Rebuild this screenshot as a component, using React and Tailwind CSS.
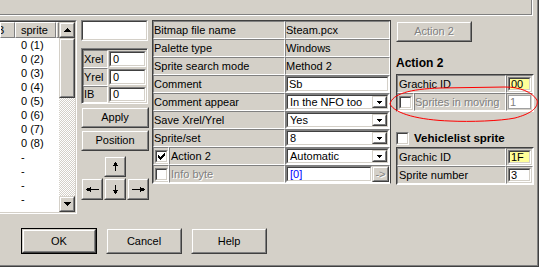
import React from "react";

const RA = "border border-t-[#d4d0c8] border-l-[#d4d0c8] border-r-[#404040] border-b-[#404040]";
const RB = "border border-t-white border-l-white border-r-[#808080] border-b-[#808080]";
const SA = "border border-t-[#808080] border-l-[#808080] border-r-white border-b-white";
const SB = "border border-t-[#404040] border-l-[#404040] border-r-[#d4d0c8] border-b-[#d4d0c8]";
const CELL = "border border-t-[#808080] border-l-[#808080] border-r-white border-b-white";
const DIS = "text-[#808080] [text-shadow:1px_1px_0_#ffffff]";

function Btn({ className = "", children, def = false }) {
  const inner = (
    <div className={`h-full w-full ${RA}`}>
      <div className={`h-full w-full ${RB} flex items-center justify-center leading-none`}>{children}</div>
    </div>
  );
  if (def) return <div className={`border border-black ${className}`}>{inner}</div>;
  return <div className={className}>{inner}</div>;
}

function Field({ className = "", innerClass = "bg-white", children }) {
  return (
    <div className={`${SA} ${className}`}>
      <div className={`h-full w-full ${SB} ${innerClass} flex items-center leading-none overflow-hidden`}>{children}</div>
    </div>
  );
}

function Check({ checked }) {
  return (
    <div className={`w-[13px] h-[13px] ${SA}`}>
      <div className={`w-full h-full bg-white ${SB} flex items-center justify-center`}>
        {checked && (
          <svg width="7" height="7" viewBox="0 0 7 7" shapeRendering="crispEdges">
            <rect x="6" y="0" width="1" height="3" fill="#000" />
            <rect x="5" y="1" width="1" height="3" fill="#000" />
            <rect x="4" y="2" width="1" height="3" fill="#000" />
            <rect x="3" y="3" width="1" height="3" fill="#000" />
            <rect x="2" y="4" width="1" height="3" fill="#000" />
            <rect x="1" y="3" width="1" height="3" fill="#000" />
            <rect x="0" y="2" width="1" height="3" fill="#000" />
          </svg>
        )}
      </div>
    </div>
  );
}

const TriUp = () => (
  <svg width="7" height="4" viewBox="0 0 7 4" shapeRendering="crispEdges">
    <rect x="3" y="0" width="1" height="1" fill="#000" />
    <rect x="2" y="1" width="3" height="1" fill="#000" />
    <rect x="1" y="2" width="5" height="1" fill="#000" />
    <rect x="0" y="3" width="7" height="1" fill="#000" />
  </svg>
);
const TriDown = () => (
  <svg width="7" height="4" viewBox="0 0 7 4" shapeRendering="crispEdges">
    <rect x="0" y="0" width="7" height="1" fill="#000" />
    <rect x="1" y="1" width="5" height="1" fill="#000" />
    <rect x="2" y="2" width="3" height="1" fill="#000" />
    <rect x="3" y="3" width="1" height="1" fill="#000" />
  </svg>
);
const SmallDown = () => (
  <svg width="5" height="3" viewBox="0 0 5 3" shapeRendering="crispEdges">
    <rect x="0" y="0" width="5" height="1" fill="#000" />
    <rect x="1" y="1" width="3" height="1" fill="#000" />
    <rect x="2" y="2" width="1" height="1" fill="#000" />
  </svg>
);
const ArrUp = () => (
  <svg width="5" height="9" viewBox="0 0 5 9" shapeRendering="crispEdges">
    <rect x="2" y="0" width="1" height="9" fill="#000" />
    <rect x="1" y="1" width="3" height="2" fill="#000" />
    <rect x="0" y="3" width="5" height="1" fill="#000" />
  </svg>
);
const ArrDown = () => (
  <svg width="5" height="9" viewBox="0 0 5 9" shapeRendering="crispEdges">
    <rect x="2" y="0" width="1" height="9" fill="#000" />
    <rect x="1" y="6" width="3" height="2" fill="#000" />
    <rect x="0" y="5" width="5" height="1" fill="#000" />
  </svg>
);
const ArrLeft = () => (
  <svg width="13" height="5" viewBox="0 0 13 5" shapeRendering="crispEdges">
    <rect x="0" y="2" width="13" height="1" fill="#000" />
    <rect x="1" y="1" width="3" height="3" fill="#000" />
    <rect x="4" y="0" width="1" height="5" fill="#000" />
  </svg>
);
const ArrRight = () => (
  <svg width="13" height="5" viewBox="0 0 13 5" shapeRendering="crispEdges">
    <rect x="0" y="2" width="13" height="1" fill="#000" />
    <rect x="9" y="1" width="3" height="3" fill="#000" />
    <rect x="8" y="0" width="1" height="5" fill="#000" />
  </svg>
);

function Combo({ text }) {
  return (
    <Field className="h-full w-full">
      <span className="flex-1 pl-[2px] whitespace-nowrap">{text}</span>
      <Btn className="w-[15px] h-full">
        <SmallDown />
      </Btn>
    </Field>
  );
}

function ListView() {
  const items = ["0 (1)", "0 (2)", "0 (3)", "0 (4)", "0 (5)", "0 (6)", "0 (7)", "0 (8)", "-", "-", "-", "-"];
  return (
    <div className="w-[77px] h-[194px] shrink-0 border-t border-r border-b border-t-[#808080] border-r-white border-b-white">
      <div className="h-full flex border-t border-r border-b border-t-[#404040] border-r-[#d4d0c8] border-b-[#d4d0c8]">
        <div className="w-[59px] h-full bg-white overflow-hidden flex flex-col">
          <div className="flex h-[16px] shrink-0 bg-[#d4d0c8]">
            <div className="w-[15px] h-full border border-t-white border-l-white border-r-[#808080] border-b-[#808080] flex items-center overflow-hidden leading-none">
              <span className="ml-[-4px]">B</span>
            </div>
            <div className="w-[41px] h-full border border-t-white border-l-white border-r-[#808080] border-b-[#808080] flex items-center pl-[5px] leading-none">
              sprite
            </div>
            <div className="flex-1 h-full border border-t-white border-l-white border-r-[#808080] border-b-[#808080]" />
          </div>
          <div className="flex flex-col">
            {items.map((t, i) => (
              <div key={i} className="h-[14px] leading-[14px] pl-[21px] whitespace-nowrap">
                {t}
              </div>
            ))}
          </div>
        </div>
        <div className="w-[16px] h-full flex flex-col">
          <Btn className="w-[16px] h-[16px] shrink-0">
            <TriUp />
          </Btn>
          <Btn className="w-[16px] h-[60px] shrink-0" />
          <div className="flex-1 bg-[repeating-conic-gradient(#ffffff_0%_25%,#d4d0c8_0%_50%)] bg-[length:2px_2px]" />
          <Btn className="w-[16px] h-[16px] shrink-0">
            <TriDown />
          </Btn>
        </div>
      </div>
    </div>
  );
}

function SmallGridRow({ label, value, h = "h-[18px]" }) {
  return (
    <div className={`flex ${h}`}>
      <div className={`w-[25px] ${CELL} flex items-center leading-none`}>{label}</div>
      <div className="flex-1 p-[1px]">
        <Field className="h-full w-full">
          <span className="pl-[2px]">{value}</span>
        </Field>
      </div>
    </div>
  );
}

function MiddleColumn() {
  return (
    <div className="ml-[4px] w-[68px] flex flex-col shrink-0">
      <Field className="w-[67px] h-[21px]" />
      <div className={`mt-[7px] w-[67px] h-[56px] ${SA}`}>
        <div className="h-full w-full border-t border-l border-t-[#404040] border-l-[#404040] flex flex-col">
          <SmallGridRow label="Xrel" value="0" />
          <SmallGridRow label="Yrel" value="0" />
          <SmallGridRow label="IB" value="0" h="h-[17px]" />
        </div>
      </div>
      <Btn className="mt-[3px] h-[21px] w-[68px]">Apply</Btn>
      <Btn className="mt-[2px] h-[21px] w-[68px]">Position</Btn>
      <div className="mt-[5px] flex justify-center">
        <Btn className="w-[22px] h-[21px]">
          <ArrUp />
        </Btn>
      </div>
      <div className="mt-[1px] flex gap-[1px]">
        <Btn className="w-[22px] h-[22px]">
          <ArrLeft />
        </Btn>
        <Btn className="w-[22px] h-[22px]">
          <ArrDown />
        </Btn>
        <Btn className="w-[22px] h-[22px]">
          <ArrRight />
        </Btn>
      </div>
    </div>
  );
}

function PRow({ label, children }) {
  return (
    <div className="flex h-[18px]">
      <div className={`w-[132px] ${CELL} flex items-center leading-none whitespace-nowrap`}>{label}</div>
      <div className={`w-[105px] ${CELL} flex items-center leading-none whitespace-nowrap`}>{children}</div>
    </div>
  );
}

function PCheckRow({ label, checked, disabled, children }) {
  return (
    <div className="flex h-[18px]">
      <div className={`w-[16px] ${CELL} flex items-center justify-center`}>
        <Check checked={checked} />
      </div>
      <div className={`w-[116px] ${CELL} flex items-center leading-none whitespace-nowrap pl-[1px] ${disabled ? DIS : ""}`}>
        {label}
      </div>
      <div className={`w-[105px] ${CELL} flex items-center leading-none`}>{children}</div>
    </div>
  );
}

function PropertyGrid() {
  return (
    <div className="ml-[3px] w-[239px] h-[164px] shrink-0 border border-t-[#404040] border-l-[#404040] border-r-[#404040] border-b-white flex flex-col">
      <PRow label="Bitmap file name">Steam.pcx</PRow>
      <PRow label="Palette type">Windows</PRow>
      <PRow label="Sprite search mode">Method 2</PRow>
      <PRow label="Comment">
        <Field className="h-full w-full">
          <span className="pl-[1px]">Sb</span>
        </Field>
      </PRow>
      <PRow label="Comment appear">
        <Combo text="In the NFO too" />
      </PRow>
      <PRow label="Save Xrel/Yrel">
        <Combo text="Yes" />
      </PRow>
      <PRow label="Sprite/set">
        <Combo text="8" />
      </PRow>
      <PCheckRow label="Action 2" checked>
        <Combo text="Automatic" />
      </PCheckRow>
      <PCheckRow label="Info byte" disabled>
        <div className="flex h-full w-full">
          <Field className="h-full w-[86px]">
            <span className="pl-[2px] text-[#0000ff]">[0]</span>
          </Field>
          <Btn className="h-full flex-1">
            <span className={DIS}>-&gt;</span>
          </Btn>
        </div>
      </PCheckRow>
    </div>
  );
}

function RRow({ label, children }) {
  return (
    <div className="flex h-[18px]">
      <div className={`w-[109px] ${CELL} flex items-center leading-none whitespace-nowrap pl-[1px]`}>{label}</div>
      <div className={`w-[27px] ${CELL} p-[1px]`}>{children}</div>
    </div>
  );
}

function RightColumn() {
  return (
    <div className="ml-[5px] w-[138px] flex flex-col shrink-0">
      <Btn className="mt-[1px] w-[76px] h-[21px]">
        <span className={DIS}>Action 2</span>
      </Btn>
      <div className="mt-[14px] h-[14px] leading-[14px] font-bold text-[12px]">Action 2</div>
      <div className="mt-[4px] w-[138px] h-[38px] border border-t-[#404040] border-l-[#404040] border-r-white border-b-white flex flex-col">
        <RRow label="Grachic ID">
          <Field className="h-full w-full" innerClass="bg-[#ffff99]">
            <span className="pl-[1px]">00</span>
          </Field>
        </RRow>
        <div className="flex h-[18px]">
          <div className={`w-[17px] ${CELL} flex items-center justify-center`}>
            <Check />
          </div>
          <div className={`w-[92px] ${CELL} flex items-center leading-none whitespace-nowrap ${DIS}`}>Sprites in moving</div>
          <div className={`w-[27px] ${CELL} p-[1px]`}>
            <div className="h-full w-full bg-white border border-[#a0a0a0] flex items-center leading-none">
              <span className="pl-[1px] text-[#808080]">1</span>
            </div>
          </div>
        </div>
      </div>
      <div className="mt-[20px] h-[13px] flex items-center">
        <Check />
        <span className="ml-[5px] font-bold text-[11.5px] leading-none whitespace-nowrap">Vehiclelist sprite</span>
      </div>
      <div className="mt-[2px] w-[138px] h-[38px] border border-t-[#404040] border-l-[#404040] border-r-white border-b-white flex flex-col">
        <RRow label="Grachic ID">
          <Field className="h-full w-full" innerClass="bg-[#ffff99]">
            <span className="pl-[1px]">1F</span>
          </Field>
        </RRow>
        <RRow label="Sprite number">
          <Field className="h-full w-full">
            <span className="pl-[1px]">3</span>
          </Field>
        </RRow>
      </div>
    </div>
  );
}

export default function App() {
  return (
    <div className="relative w-[539px] h-[267px] overflow-hidden bg-[#d4d0c8] border-r border-b border-[#404040] font-['Liberation_Sans',Arial,sans-serif] text-[11px] text-black">
      <div className="h-full w-full border-r border-b border-[#808080] flex flex-col">
        <div className="w-[533px] h-[16px] shrink-0 border-r border-b border-white">
          <div className="w-[532px] h-[15px] border-r border-b border-[#808080]" />
        </div>
        <div className="mt-[4px] flex h-[194px] shrink-0">
          <ListView />
          <MiddleColumn />
          <PropertyGrid />
          <RightColumn />
        </div>
        <div className="mt-[14px] flex ml-[21px] gap-[9px]">
          <Btn def className="w-[76px] h-[26px]">OK</Btn>
          <Btn className="w-[76px] h-[26px]">Cancel</Btn>
          <Btn className="w-[76px] h-[26px]">Help</Btn>
        </div>
      </div>
      <svg className="absolute left-0 top-0 pointer-events-none" width="539" height="267" viewBox="0 0 539 267">
        <path
          d="M390 104 C392 94 410 89 440 88 L505 87 C520 87 532 92 537 100 C539 108 530 114 515 118 C500 121 470 122 450 121 C420 120 395 114 390 104 Z"
          fill="none"
          stroke="#ff0000"
          strokeWidth="1"
        />
      </svg>
    </div>
  );
}
